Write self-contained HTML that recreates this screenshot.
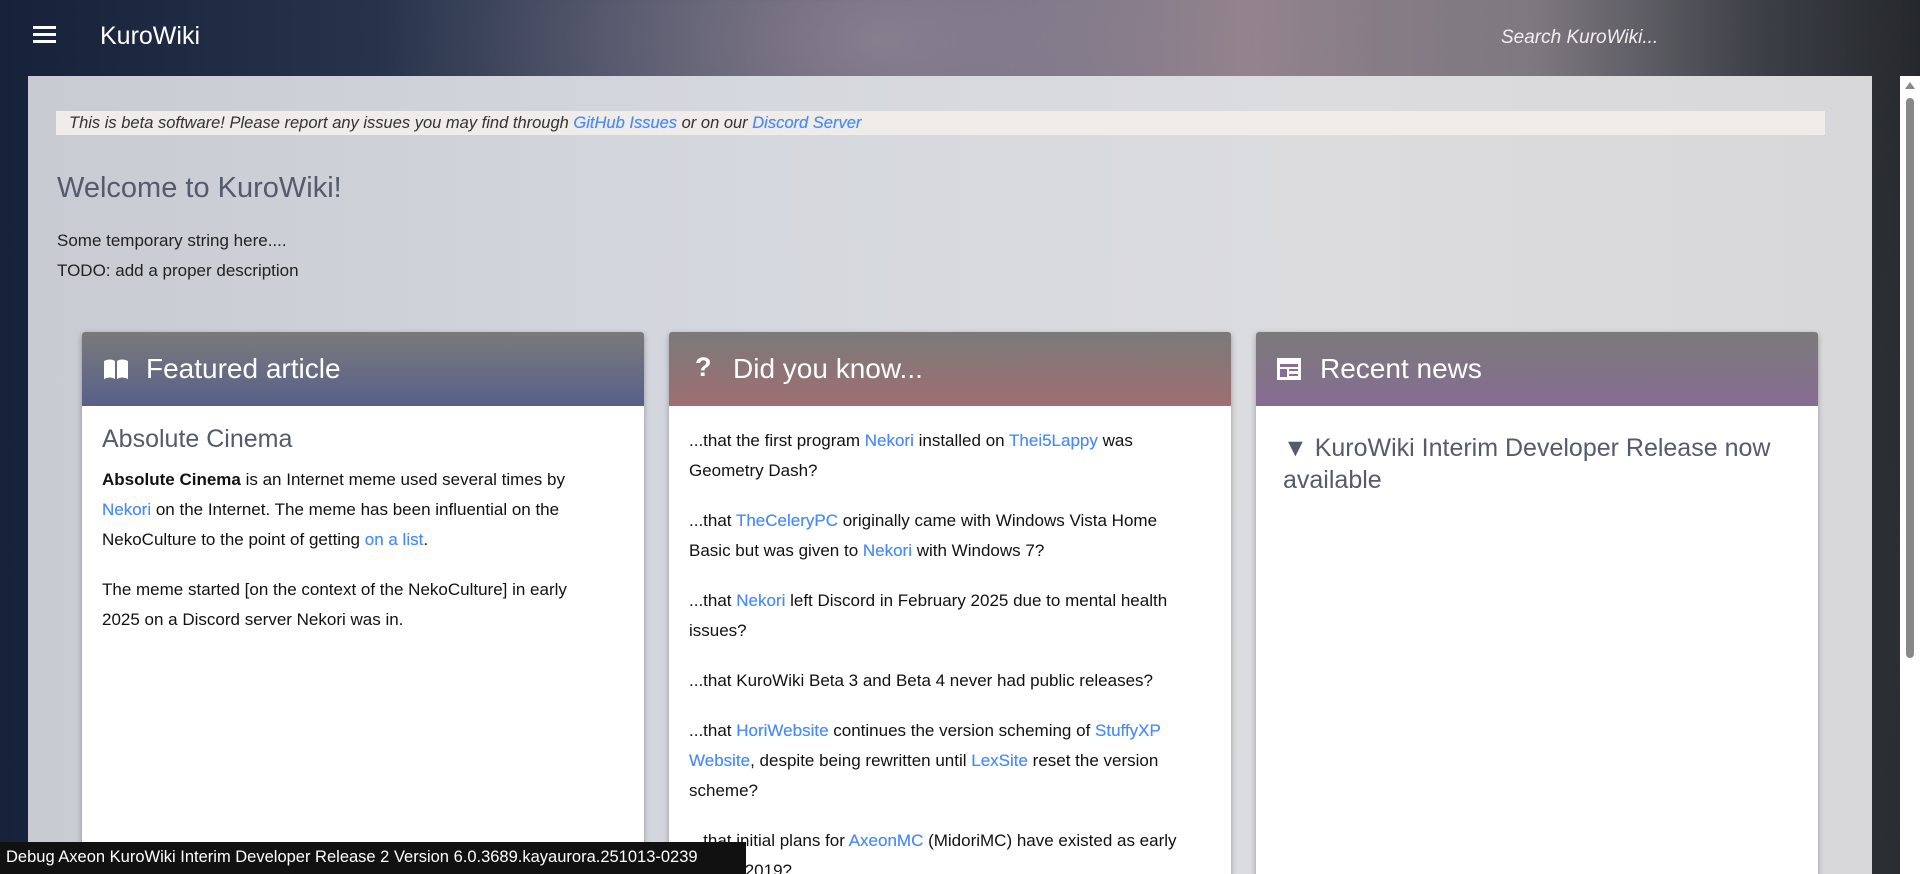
<!DOCTYPE html>
<html><head><meta charset="utf-8"><style>
*{margin:0;padding:0;box-sizing:border-box}
html,body{width:1920px;height:874px;overflow:hidden}
body{font-family:"Liberation Sans",sans-serif;position:relative;
background:
radial-gradient(ellipse 500px 300px at 880px 40px,rgba(170,150,160,.6),transparent),
radial-gradient(ellipse 300px 500px at 1900px 600px,#2b2f33,transparent),
linear-gradient(90deg,#16213a 0%,#2c3850 25%,#5a6078 50%,#8f8089 65%,#7d7880 80%,#3b3e45 92%,#25282c 100%);}
.top{position:absolute;left:0;top:0;width:1920px;height:76px}
.ham{position:absolute;left:33px;top:26px;width:23px}
.ham i{display:block;height:3px;background:#fff;margin-bottom:4px}
.title{position:absolute;left:100px;top:22px;color:#fff;font-size:25px}
.search{position:absolute;left:1501px;top:27px;color:#f2eef0;font-size:19px;font-style:italic}
.panel{position:absolute;left:28px;top:76px;width:1844px;height:798px;
background:linear-gradient(90deg,#c8cbd2 0%,#d5d8de 40%,#dcdcdf 70%,#d8d8da 100%)}
.beta{position:absolute;left:28px;top:35px;width:1769px;height:24px;background:#efecea;
font-size:16.5px;font-style:italic;color:#333;padding:3px 0 0 13px;white-space:nowrap}
a{color:#4a8cf7;text-decoration:none;text-shadow:0 0 .4px #4a8cf7}
h1{position:absolute;left:29px;top:96px;font-size:29px;font-weight:normal;color:#555a6c}
.desc{position:absolute;left:29px;top:150px;font-size:17px;line-height:30px;color:#222}
.card{position:absolute;top:256px;width:562px;height:560px;background:#fff;box-shadow:0 2px 6px rgba(0,0,0,.3);border-radius:3px 3px 0 0;overflow:hidden}
.ch{height:74px;color:#fff;font-size:28px;font-weight:300;padding:21px 0 0 64px;position:relative}
.ch svg{position:absolute;left:20px;top:25px}
.cb{padding:18px 20px;font-size:17px;line-height:30px;color:#111;white-space:nowrap}
.cb p{margin-bottom:20px}
.debug{position:absolute;left:0;top:842px;width:746px;height:32px;background:#111;color:#fff;font-size:16.5px;padding:6px 0 0 6px;white-space:nowrap}
.sb{position:absolute;left:1900px;top:76px;width:20px;height:798px;background:#fff}
.sb .th{position:absolute;left:6px;top:22px;width:8px;height:560px;background:#888;border-radius:4px}
</style></head><body>
<div class="top">
<div class="ham"><i></i><i></i><i></i></div>
<div class="title">KuroWiki</div>
<div class="search">Search KuroWiki...</div>
</div>
<div class="panel">
<div class="beta">This is beta software! Please report any issues you may find through <a>GitHub Issues</a> or on our <a>Discord Server</a></div>
<h1>Welcome to KuroWiki!</h1>
<div class="desc">Some temporary string here....<br>TODO: add a proper description</div>

<div class="card" style="left:54px">
<div class="ch" style="background:linear-gradient(#7a7a7a,#58608a)"><svg width="28" height="24" viewBox="0 0 28 24"><path d="M2 4c4-2 8-2 11 0v18c-3-2-7-2-11 0z M15 4c3-2 7-2 11 0v18c-4-2-8-2-11 0z" fill="#fff"/></svg>Featured article</div>
<div class="cb">
<div style="font-size:25px;color:#555a6c;margin-bottom:11px;line-height:30px">Absolute Cinema</div>
<p><b>Absolute Cinema</b> is an Internet meme used several times by<br><a>Nekori</a> on the Internet. The meme has been influential on the<br>NekoCulture to the point of getting <a>on a list</a>.</p>
<p>The meme started [on the context of the NekoCulture] in early<br>2025 on a Discord server Nekori was in.</p>
</div></div>

<div class="card" style="left:641px">
<div class="ch" style="background:linear-gradient(#7a7a7a,#a06e72)"><span style="position:absolute;left:26px;top:20px;font-weight:bold;font-size:27px">?</span>Did you know...</div>
<div class="cb" style="padding-top:20px">
<p>...that the first program <a>Nekori</a> installed on <a>Thei5Lappy</a> was<br>Geometry Dash?</p>
<p>...that <a>TheCeleryPC</a> originally came with Windows Vista Home<br>Basic but was given to <a>Nekori</a> with Windows 7?</p>
<p>...that <a>Nekori</a> left Discord in February 2025 due to mental health<br>issues?</p>
<p>...that KuroWiki Beta 3 and Beta 4 never had public releases?</p>
<p>...that <a>HoriWebsite</a> continues the version scheming of <a>StuffyXP</a><br><a>Website</a>, despite being rewritten until <a>LexSite</a> reset the version<br>scheme?</p>
<p>...that initial plans for <a>AxeonMC</a> (MidoriMC) have existed as early<br>as mid-2019?</p>
</div></div>

<div class="card" style="left:1228px">
<div class="ch" style="background:linear-gradient(#7a7a7a,#876c93)"><svg width="26" height="24" viewBox="0 0 26 24"><rect x="1" y="1" width="24" height="22" fill="#fff"/><rect x="4" y="7" width="18" height="3" fill="#876c93"/><rect x="4" y="12" width="7" height="8" fill="#876c93"/><rect x="13" y="12" width="9" height="2" fill="#876c93"/><rect x="13" y="17" width="9" height="2" fill="#876c93"/></svg>Recent news</div>
<div class="cb" style="font-size:25px;color:#555a6c;line-height:32px;padding:26px 20px 0 27px;white-space:normal">▼ KuroWiki Interim Developer Release now available</div>
</div>
</div>
<div class="sb"><div style="position:absolute;left:5px;top:6px;border:5px solid transparent;border-bottom:7px solid #888;border-top:0"></div><div class="th"></div></div>
<div class="debug">Debug Axeon KuroWiki Interim Developer Release 2 Version 6.0.3689.kayaurora.251013-0239</div>
</body></html>
